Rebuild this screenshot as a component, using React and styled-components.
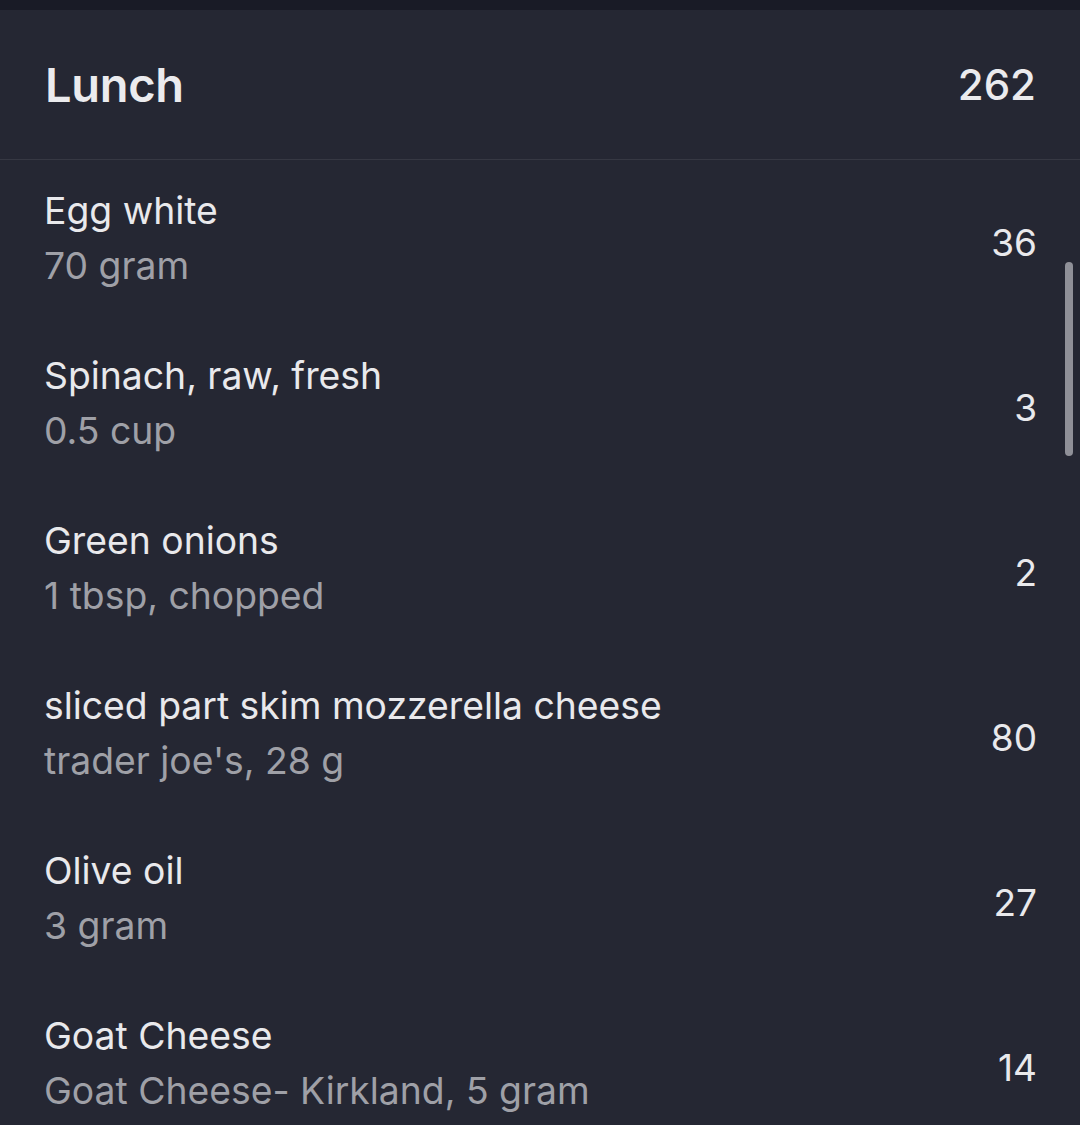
import React from "react";
import styled, { createGlobalStyle } from "styled-components";

const Global = createGlobalStyle`
  html, body { margin: 0; padding: 0; background: #252733; }
  body { font-family: Inter, "Noto Sans", "Liberation Sans", sans-serif; -webkit-font-smoothing: antialiased; }
`;

const Screen = styled.div`
  position: relative;
  width: 1080px;
  height: 1125px;
  overflow: hidden;
  background: #252733;
  display: flex;
  flex-direction: column;
`;

const TopStrip = styled.div`
  height: 10px;
  background: #191b26;
  flex: none;
`;

const Header = styled.header`
  height: 149px;
  flex: none;
  display: flex;
  align-items: center;
  justify-content: space-between;
  padding: 0 44px 0 45px;
  border-bottom: 1px solid #363843;
  color: #ebebee;
`;

const Title = styled.h1`
  margin: 0;
  font-size: 47px;
  font-weight: 600;
  letter-spacing: -0.3px;
`;

const Total = styled.span`
  font-size: 42px;
  font-weight: 500;
`;

const List = styled.ul`
  list-style: none;
  margin: 0;
  padding: 0;
`;

const Row = styled.li`
  height: 165px;
  display: flex;
  align-items: center;
  justify-content: space-between;
  padding: 0 43px 0 44px;
`;

const Info = styled.div`
  display: flex;
  flex-direction: column;
  margin-top: -9px;
`;

const Name = styled.span`
  font-size: 37.3px;
  line-height: 55px;
  color: #e9e9ec;
`;

const Detail = styled.span`
  font-size: 37.3px;
  line-height: 55px;
  color: #9fa0a7;
`;

const Cal = styled.span`
  font-size: 37px;
  color: #e9e9ec;
`;

const Scrollbar = styled.div`
  position: absolute;
  right: 7px;
  top: 262px;
  width: 8px;
  height: 194px;
  border-radius: 4px;
  background: #8f9098;
`;

const items = [
  ["Egg white", "70 gram", "36"],
  ["Spinach, raw, fresh", "0.5 cup", "3"],
  ["Green onions", "1 tbsp, chopped", "2"],
  ["sliced part skim mozzerella cheese", "trader joe's, 28 g", "80"],
  ["Olive oil", "3 gram", "27"],
  ["Goat Cheese", "Goat Cheese- Kirkland, 5 gram", "14"],
];

export default function App() {
  return (
    <>
      <Global />
      <Screen>
        <TopStrip />
        <Header>
          <Title>Lunch</Title>
          <Total>262</Total>
        </Header>
        <List>
          {items.map(([n, d, c]) => (
            <Row key={n}>
              <Info>
                <Name>{n}</Name>
                <Detail>{d}</Detail>
              </Info>
              <Cal>{c}</Cal>
            </Row>
          ))}
        </List>
        <Scrollbar />
      </Screen>
    </>
  );
}
